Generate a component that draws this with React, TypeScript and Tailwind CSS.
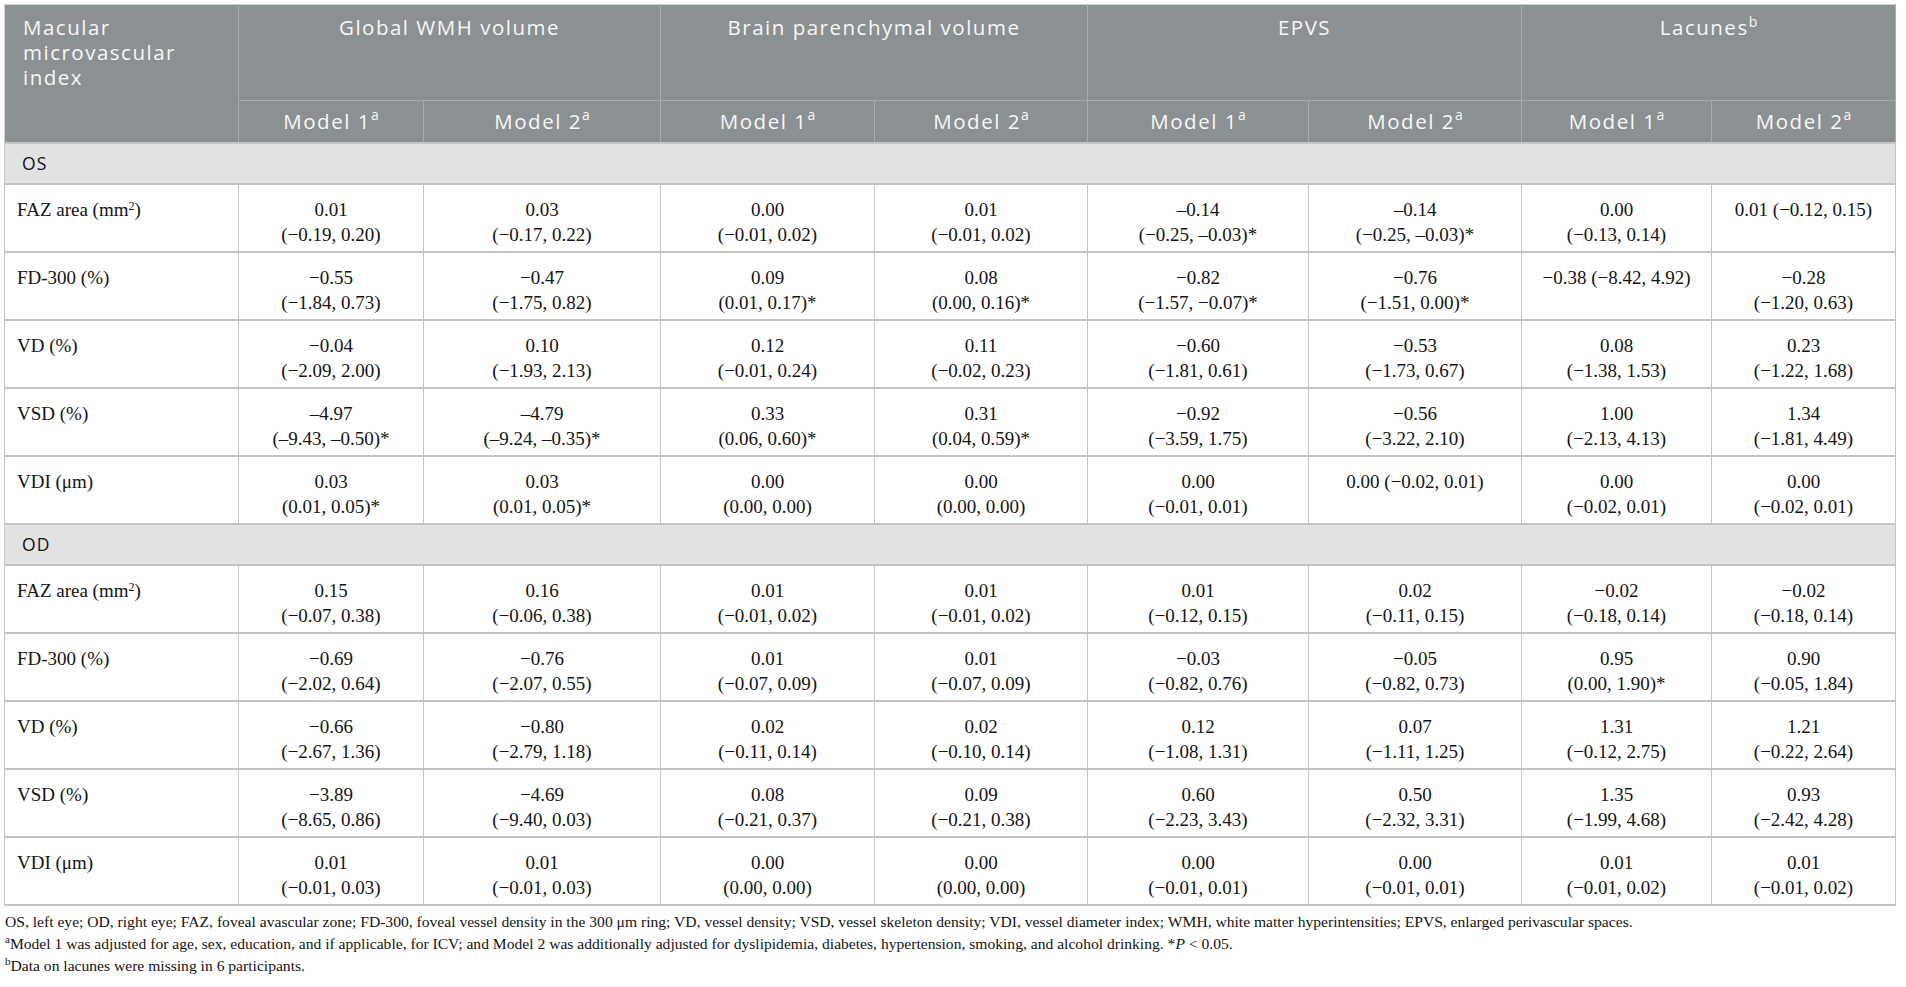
import React from "react";

type Cell = string | [string, string];

const HEAD = ["Global WMH volume", "Brain parenchymal volume", "EPVS"];

const OS_ROWS: { label: React.ReactNode; cells: Cell[] }[] = [
  {
    label: <>FAZ area (mm<sup className="text-[12px]">2</sup>)</>,
    cells: [
      ["0.01", "(−0.19, 0.20)"],
      ["0.03", "(−0.17, 0.22)"],
      ["0.00", "(−0.01, 0.02)"],
      ["0.01", "(−0.01, 0.02)"],
      ["–0.14", "(−0.25, –0.03)*"],
      ["–0.14", "(−0.25, –0.03)*"],
      ["0.00", "(−0.13, 0.14)"],
      "0.01 (−0.12, 0.15)",
    ],
  },
  {
    label: "FD-300 (%)",
    cells: [
      ["−0.55", "(−1.84, 0.73)"],
      ["−0.47", "(−1.75, 0.82)"],
      ["0.09", "(0.01, 0.17)*"],
      ["0.08", "(0.00, 0.16)*"],
      ["−0.82", "(−1.57, −0.07)*"],
      ["−0.76", "(−1.51, 0.00)*"],
      "−0.38 (−8.42, 4.92)",
      ["−0.28", "(−1.20, 0.63)"],
    ],
  },
  {
    label: "VD (%)",
    cells: [
      ["−0.04", "(−2.09, 2.00)"],
      ["0.10", "(−1.93, 2.13)"],
      ["0.12", "(−0.01, 0.24)"],
      ["0.11", "(−0.02, 0.23)"],
      ["−0.60", "(−1.81, 0.61)"],
      ["−0.53", "(−1.73, 0.67)"],
      ["0.08", "(−1.38, 1.53)"],
      ["0.23", "(−1.22, 1.68)"],
    ],
  },
  {
    label: "VSD (%)",
    cells: [
      ["–4.97", "(–9.43, –0.50)*"],
      ["–4.79", "(–9.24, –0.35)*"],
      ["0.33", "(0.06, 0.60)*"],
      ["0.31", "(0.04, 0.59)*"],
      ["−0.92", "(−3.59, 1.75)"],
      ["−0.56", "(−3.22, 2.10)"],
      ["1.00", "(−2.13, 4.13)"],
      ["1.34", "(−1.81, 4.49)"],
    ],
  },
  {
    label: "VDI (μm)",
    cells: [
      ["0.03", "(0.01, 0.05)*"],
      ["0.03", "(0.01, 0.05)*"],
      ["0.00", "(0.00, 0.00)"],
      ["0.00", "(0.00, 0.00)"],
      ["0.00", "(−0.01, 0.01)"],
      "0.00 (−0.02, 0.01)",
      ["0.00", "(−0.02, 0.01)"],
      ["0.00", "(−0.02, 0.01)"],
    ],
  },
];

const OD_ROWS: { label: React.ReactNode; cells: Cell[] }[] = [
  {
    label: <>FAZ area (mm<sup className="text-[12px]">2</sup>)</>,
    cells: [
      ["0.15", "(−0.07, 0.38)"],
      ["0.16", "(−0.06, 0.38)"],
      ["0.01", "(−0.01, 0.02)"],
      ["0.01", "(−0.01, 0.02)"],
      ["0.01", "(−0.12, 0.15)"],
      ["0.02", "(−0.11, 0.15)"],
      ["−0.02", "(−0.18, 0.14)"],
      ["−0.02", "(−0.18, 0.14)"],
    ],
  },
  {
    label: "FD-300 (%)",
    cells: [
      ["−0.69", "(−2.02, 0.64)"],
      ["−0.76", "(−2.07, 0.55)"],
      ["0.01", "(−0.07, 0.09)"],
      ["0.01", "(−0.07, 0.09)"],
      ["−0.03", "(−0.82, 0.76)"],
      ["−0.05", "(−0.82, 0.73)"],
      ["0.95", "(0.00, 1.90)*"],
      ["0.90", "(−0.05, 1.84)"],
    ],
  },
  {
    label: "VD (%)",
    cells: [
      ["−0.66", "(−2.67, 1.36)"],
      ["−0.80", "(−2.79, 1.18)"],
      ["0.02", "(−0.11, 0.14)"],
      ["0.02", "(−0.10, 0.14)"],
      ["0.12", "(−1.08, 1.31)"],
      ["0.07", "(−1.11, 1.25)"],
      ["1.31", "(−0.12, 2.75)"],
      ["1.21", "(−0.22, 2.64)"],
    ],
  },
  {
    label: "VSD (%)",
    cells: [
      ["−3.89", "(−8.65, 0.86)"],
      ["−4.69", "(−9.40, 0.03)"],
      ["0.08", "(−0.21, 0.37)"],
      ["0.09", "(−0.21, 0.38)"],
      ["0.60", "(−2.23, 3.43)"],
      ["0.50", "(−2.32, 3.31)"],
      ["1.35", "(−1.99, 4.68)"],
      ["0.93", "(−2.42, 4.28)"],
    ],
  },
  {
    label: "VDI (μm)",
    cells: [
      ["0.01", "(−0.01, 0.03)"],
      ["0.01", "(−0.01, 0.03)"],
      ["0.00", "(0.00, 0.00)"],
      ["0.00", "(0.00, 0.00)"],
      ["0.00", "(−0.01, 0.01)"],
      ["0.00", "(−0.01, 0.01)"],
      ["0.01", "(−0.01, 0.02)"],
      ["0.01", "(−0.01, 0.02)"],
    ],
  },
];

const sans = "font-['Open_Sans',sans-serif]";
const serif = "font-['Liberation_Serif',serif]";
// the header face in the picture is wide and airy; Open Sans with tracking gets the widths
const headText = "font-normal text-[20.5px] leading-[25px] tracking-[1.5px]";

function Sup({ c }: { c: string }) {
  return <sup className="text-[14px] top-[-0.6em] tracking-normal">{c}</sup>;
}

function ModelHead({ n }: { n: number }) {
  return (
    <th className={`border border-[#a7abad] ${headText} text-center align-middle`}>
      Model {n}
      <Sup c="a" />
    </th>
  );
}

function DataRows({ rows }: { rows: typeof OS_ROWS }) {
  return (
    <>
      {rows.map((r, i) => (
        <tr key={i} className="h-[68px]">
          <td className="border-y-2 border-x border-[#c4c4c4] pl-[12px] pt-[12px] align-top text-left">
            {r.label}
          </td>
          {r.cells.map((c, j) => (
            <td
              key={j}
              className="border-y-2 border-x border-[#c4c4c4] pt-[12px] align-top text-center"
            >
              {typeof c === "string" ? (
                c
              ) : (
                <>
                  {c[0]}
                  <br />
                  {c[1]}
                </>
              )}
            </td>
          ))}
        </tr>
      ))}
    </>
  );
}

function Section({ name }: { name: string }) {
  return (
    <tr className="h-[41px]">
      <td
        colSpan={9}
        className={`${sans} bg-[#e1e2e2] border-y-2 border-x border-[#c4c4c4] pl-[17px] text-[17.5px] tracking-[1.2px] text-[#111] align-middle`}
      >
        {name}
      </td>
    </tr>
  );
}

export default function App() {
  return (
    <div className="min-h-screen bg-white pl-[4px] pt-[4px] text-[#141414]">
      <table className={`table-fixed border-collapse w-[1891px] ${serif} text-[19px] leading-[25px]`}>
        <colgroup>
          <col className="w-[234px]" />
          <col className="w-[185px]" />
          <col className="w-[237px]" />
          <col className="w-[214px]" />
          <col className="w-[213px]" />
          <col className="w-[221px]" />
          <col className="w-[213px]" />
          <col className="w-[190px]" />
          <col className="w-[184px]" />
        </colgroup>
        <thead className={`${sans} bg-[#8b9093] text-[#f7f7f7]`}>
          <tr className="h-[96px]">
            <th
              rowSpan={2}
              className={`border border-[#a7abad] border-t-[#cfd1d2] border-l-[#cfd1d2] ${headText} text-left align-top pl-[18px] pr-[8px] pt-[10px]`}
            >
              Macular microvascular index
            </th>
            {HEAD.map((h) => (
              <th
                key={h}
                colSpan={2}
                className={`border border-[#a7abad] border-t-[#cfd1d2] ${headText} text-center align-top pt-[10px]`}
              >
                {h}
              </th>
            ))}
            <th
              colSpan={2}
              className={`border border-[#a7abad] border-t-[#cfd1d2] ${headText} text-center align-top pt-[10px]`}
            >
              Lacunes
              <Sup c="b" />
            </th>
          </tr>
          <tr className="h-[42px]">
            {[1, 2, 1, 2, 1, 2, 1, 2].map((n, i) => (
              <ModelHead key={i} n={n} />
            ))}
          </tr>
        </thead>
        <tbody>
          <Section name="OS" />
          <DataRows rows={OS_ROWS} />
          <Section name="OD" />
          <DataRows rows={OD_ROWS} />
        </tbody>
      </table>
      <div className={`${serif} text-[15.6px] leading-[22px] mt-[5px] pl-[1px] text-[#141414]`}>
        <p>
          OS, left eye; OD, right eye; FAZ, foveal avascular zone; FD-300, foveal vessel density in the 300 μm ring; VD,
          vessel density; VSD, vessel skeleton density; VDI, vessel diameter index; WMH, white matter hyperintensities;
          EPVS, enlarged perivascular spaces.
        </p>
        <p>
          <sup className="text-[11px]">a</sup>Model 1 was adjusted for age, sex, education, and if applicable, for ICV;
          and Model 2 was additionally adjusted for dyslipidemia, diabetes, hypertension, smoking, and alcohol drinking.
          *<i>P</i> &lt; 0.05.
        </p>
        <p>
          <sup className="text-[11px]">b</sup>Data on lacunes were missing in 6 participants.
        </p>
      </div>
    </div>
  );
}
